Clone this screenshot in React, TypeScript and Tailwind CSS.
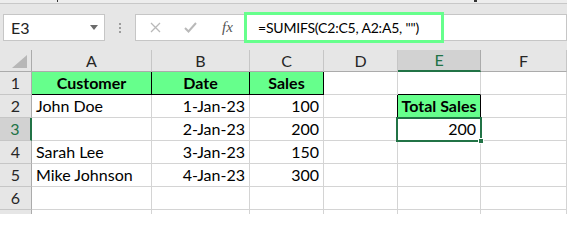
import React from 'react';

type Cell = {
  text?: string;
  align?: 'left' | 'right' | 'center';
  bold?: boolean;
  kind?: 'plain' | 'green' | 'edgeRight' | 'edgeBottom';
};

const font = { fontFamily: 'Lato, "Liberation Sans", sans-serif' };

const columns = ['A', 'B', 'C', 'D', 'E', 'F'];

const rows: Cell[][] = [
  [
    { text: 'Customer', align: 'center', bold: true, kind: 'green' },
    { text: 'Date', align: 'center', bold: true, kind: 'green' },
    { text: 'Sales', align: 'center', bold: true, kind: 'green' },
    {},
    { kind: 'edgeBottom' },
    {},
  ],
  [
    { text: 'John Doe' },
    { text: '1-Jan-23', align: 'right' },
    { text: '100', align: 'right' },
    { kind: 'edgeRight' },
    { text: 'Total Sales', align: 'center', bold: true, kind: 'green' },
    {},
  ],
  [{}, { text: '2-Jan-23', align: 'right' }, { text: '200', align: 'right' }, {}, { text: '200', align: 'right' }, {}],
  [{ text: 'Sarah Lee' }, { text: '3-Jan-23', align: 'right' }, { text: '150', align: 'right' }, {}, {}, {}],
  [{ text: 'Mike Johnson' }, { text: '4-Jan-23', align: 'right' }, { text: '300', align: 'right' }, {}, {}, {}],
  [{}, {}, {}, {}, {}, {}],
  [{}, {}, {}, {}, {}, {}],
];

function cellClass(cell: Cell) {
  const base = 'h-[23px] flex items-center px-[4px] text-[16px] text-black whitespace-nowrap overflow-hidden';
  const align =
    cell.align === 'right' ? 'justify-end' : cell.align === 'center' ? 'justify-center' : 'justify-start';
  let border = 'border-r border-b border-[#d4d4d4]';
  if (cell.kind === 'green') border = 'bg-[#66ff8c] border-r border-b border-black';
  if (cell.kind === 'edgeRight') border = 'border-r border-b border-r-black border-b-[#d4d4d4]';
  if (cell.kind === 'edgeBottom') border = 'border-r border-b border-r-[#d4d4d4] border-b-black';
  return `${base} ${align} ${border} ${cell.bold ? 'font-bold' : ''}`;
}

function FormulaBar() {
  return (
    <div className="relative h-[50px] bg-[#e6e6e6]">
      <div className="h-[4px] border-b border-[#c8c8c8] bg-[#ededed]" />
      <div className="absolute left-[57px] top-0 h-[2px] w-[1px] bg-[#333]" />
      <div className="absolute left-[474px] top-0 h-[2px] w-[3px] bg-[#333]" />
      <div className="mt-[8px] flex items-center">
        <div className="ml-[3px] flex h-[27px] w-[102px] items-center justify-between border border-[#c6c6c6] bg-white pl-[7px] pr-[6px]">
          <span className="text-[16px] text-[#222]" style={font}>
            E3
          </span>
          <svg width="8" height="5" viewBox="0 0 8 5">
            <path d="M0 0 H8 L4 5 Z" fill="#6b6b6b" />
          </svg>
        </div>
        <div className="mx-[14px] flex flex-col gap-[2px]">
          <div className="h-[2px] w-[2px] bg-[#9c9c9c]" />
          <div className="h-[2px] w-[2px] bg-[#9c9c9c]" />
          <div className="h-[2px] w-[2px] bg-[#9c9c9c]" />
        </div>
        <div className="flex h-[27px] w-[109px] items-center border-y border-l border-[#c6c6c6] bg-white">
          <svg className="ml-[14px]" width="11" height="11" viewBox="0 0 11 11">
            <path d="M1 1 L10 10 M10 1 L1 10" stroke="#b9b9b9" strokeWidth="1.3" />
          </svg>
          <svg className="ml-[23px]" width="13" height="11" viewBox="0 0 13 11">
            <path d="M1 6 L4.5 9.5 L12 1" stroke="#b9b9b9" strokeWidth="2" fill="none" />
          </svg>
          <span
            className="ml-[25px] text-[15px] italic text-[#555]"
            style={{ fontFamily: '"Liberation Serif", serif' }}
          >
            fx
          </span>
        </div>
        <div className="flex h-[31px] w-[200px] items-center overflow-hidden border-[3px] border-[#66ff8c] bg-white pl-[11px]">
          <span className="whitespace-nowrap text-[14px] tracking-[-0.2px] text-black" style={font}>
            =SUMIFS(C2:C5, A2:A5, "")
          </span>
        </div>
        <div className="h-[27px] flex-1 border-y border-r border-[#c6c6c6] bg-white" />
      </div>
    </div>
  );
}

function Sheet() {
  return (
    <div className="relative" style={font}>
      <div className="grid grid-cols-[32px_120px_98px_74px_74px_83px_1fr]">
        <div className="relative h-[22px] border-r border-b border-[#ababab] bg-[#e6e6e6]">
          <svg className="absolute bottom-[3px] right-[4px]" width="15" height="13" viewBox="0 0 15 13">
            <path d="M15 0 V13 H0 Z" fill="#b7b7b7" />
          </svg>
        </div>
        {columns.map((c) =>
          c === 'E' ? (
            <div
              key={c}
              className="flex h-[22px] items-center justify-center border-r border-b-2 border-r-[#ababab] border-b-[#217346] bg-[#d2d2d2] text-[16px] text-[#217346]"
            >
              {c}
            </div>
          ) : (
            <div
              key={c}
              className="flex h-[22px] items-center justify-center border-r border-b border-r-[#c6c6c6] border-b-[#ababab] bg-[#e6e6e6] text-[16px] text-[#262626]"
            >
              {c}
            </div>
          ),
        )}
        {rows.map((row, r) => (
          <React.Fragment key={r}>
            {r === 2 ? (
              <div className="flex h-[23px] items-center justify-center border-r-2 border-b border-r-[#217346] border-b-[#c6c6c6] bg-[#d2d2d2] text-[16px] text-[#217346]">
                {r + 1}
              </div>
            ) : (
              <div className="flex h-[23px] items-center justify-center border-r border-b border-r-[#ababab] border-b-[#c6c6c6] bg-[#e6e6e6] text-[16px] text-[#262626]">
                {r < 6 ? r + 1 : ''}
              </div>
            )}
            {row.map((cell, i) => (
              <div key={i} className={cellClass(cell)}>
                {cell.text}
              </div>
            ))}
          </React.Fragment>
        ))}
      </div>
      <div className="pointer-events-none absolute left-[396px] top-[67px] h-[25px] w-[86px] border-2 border-[#217346]">
        <div className="absolute -bottom-[4px] -right-[4px] h-[6px] w-[6px] border border-white bg-[#217346]" />
      </div>
    </div>
  );
}

export default function App() {
  return (
    <div className="h-[214px] w-[567px] overflow-hidden bg-white">
      <FormulaBar />
      <Sheet />
    </div>
  );
}
